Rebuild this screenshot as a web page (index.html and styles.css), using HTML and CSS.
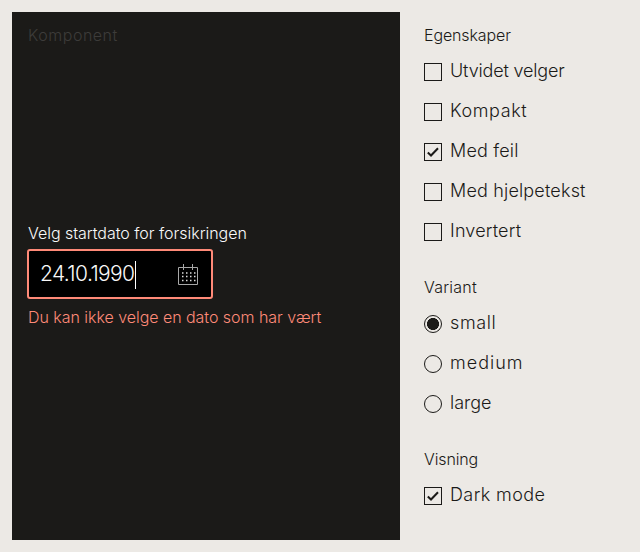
FILE: index.html
```html
<!DOCTYPE html>
<html lang="no">
<head>
<meta charset="utf-8">
<title>Datovelger</title>
<link rel="stylesheet" href="styles.css">
</head>
<body>
<main class="example">
  <section class="preview">
    <h1 class="title">Komponent</h1>
    <div class="field">
      <label class="field-label">Velg startdato for forsikringen</label>
      <div class="input">
        <span class="value">24.10.1990</span><span class="caret"></span>
        <svg class="calendar" width="20" height="21" viewBox="0 0 20 21" fill="none">
          <path d="M.5 3.500h19v17H.5zM5.500 0v6M14.500 0v6" stroke="#a8a8a8"/>
          <path d="M4 9h14M4 12.500h14M4 16.500h14" stroke="#ddd" stroke-width="1.500" stroke-dasharray="1.500 2.500"/>
        </svg>
      </div>
      <p class="error">Du kan ikke velge en dato som har vært</p>
    </div>
  </section>
  <aside class="controls">
    <div class="group">
      <h2 class="heading">Egenskaper</h2>
      <div class="option"><i class="box"></i><span class="tight">Utvidet velger</span></div>
      <div class="option"><i class="box"></i><span class="wide">Kompakt</span></div>
      <div class="option"><i class="box"><svg width="16" height="16" viewBox="0 0 16 16"><path d="M2.800 8.500l3.200 3L13 4.200" fill="none" stroke="#1b1a18" stroke-width="2"/></svg></i><span class="loose">Med feil</span></div>
      <div class="option"><i class="box"></i><span class="loose">Med hjelpetekst</span></div>
      <div class="option"><i class="box"></i><span class="loose">Invertert</span></div>
    </div>
    <div class="group">
      <h2 class="heading variant">Variant</h2>
      <div class="option"><i class="box radio on"></i><span class="wide">small</span></div>
      <div class="option"><i class="box radio"></i><span class="widest">medium</span></div>
      <div class="option"><i class="box radio"></i><span>large</span></div>
    </div>
    <div class="group">
      <h2 class="heading">Visning</h2>
      <div class="option"><i class="box"><svg width="16" height="16" viewBox="0 0 16 16"><path d="M2.800 8.500l3.200 3L13 4.200" fill="none" stroke="#1b1a18" stroke-width="2"/></svg></i><span class="roomy">Dark mode</span></div>
    </div>
  </aside>
</main>
</body>
</html>
```
FILE: styles.css
```css
* { box-sizing: border-box; }
body {
  margin: 0;
  background: #ece9e5;
  color: #1b1a18;
  font-family: Inter, "Liberation Sans", sans-serif;
  font-weight: 300;
}
h1, h2, p { margin: 0; font-weight: 300; font-size: 16px; line-height: 24px; }
.example { display: grid; grid-template-columns: 388px 1fr; gap: 24px; height: 552px; padding: 12px; }
.preview { display: flex; flex-direction: column; background: #1b1a18; padding: 11px 16px; }
.title { color: #3d3c3a; letter-spacing: 0.520px; }
.field { margin-top: 174px; color: #f9f9f9; }
.field-label { display: block; font-size: 16px; line-height: 24px; letter-spacing: -0.030px; }
.input {
  display: flex;
  align-items: center;
  width: 186px;
  height: 50px;
  margin: 4px 0 0 -1px;
  padding: 0 13px 0 11px;
  border: 2px solid #ff8a78;
  border-radius: 3px;
  background: #000;
}
.value { font-size: 21px; line-height: 28px; letter-spacing: -0.600px; }
.caret { width: 1px; height: 28px; margin-top: 2px; background: #fff; }
.calendar { margin-left: auto; }
.error { margin-top: 6px; color: #ff8a78; letter-spacing: -0.040px; }
.controls { padding-top: 11px; }
.group { margin-bottom: 24px; }
.heading { letter-spacing: -0.120px; margin-bottom: 4px; }
.variant { letter-spacing: 0.220px; }
.option { display: flex; align-items: center; height: 40px; font-size: 18px; line-height: 28px; }
.option span { margin-top: -1px; }
.tight { letter-spacing: -0.180px; }
.loose { letter-spacing: 0.170px; }
.roomy { letter-spacing: 0.400px; }
.wide { letter-spacing: 0.600px; }
.widest { letter-spacing: 1px; }
.box { display: block; flex: none; width: 18px; height: 18px; margin: 1px 8px 0 0; border: 1px solid #1b1a18; }
.box svg { display: block; }
.radio { border-radius: 50%; }
.on { background: radial-gradient(circle, #1b1a18 5.700px, transparent 6.300px); }
```
